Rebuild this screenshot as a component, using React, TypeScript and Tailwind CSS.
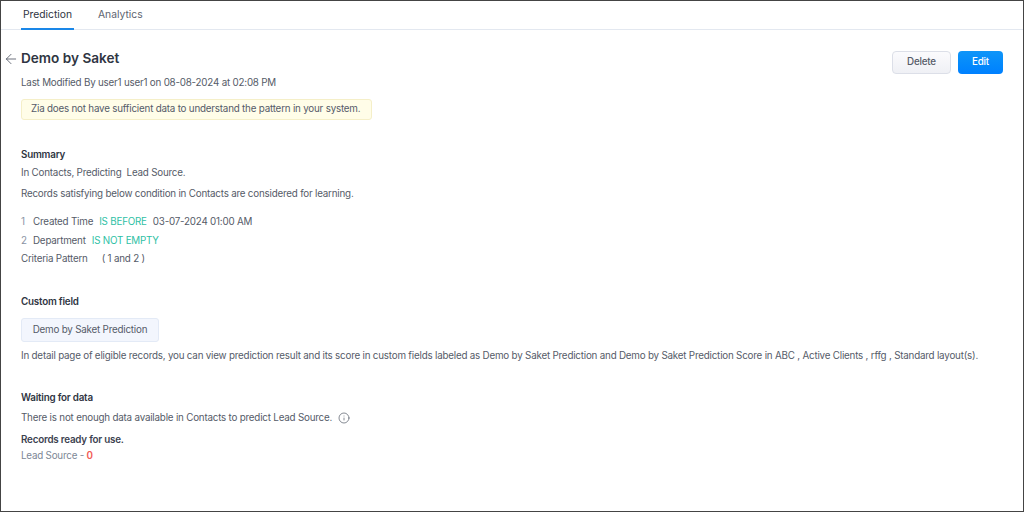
import { ArrowLeft, Info } from 'lucide-react';

export default function App() {
  return (
    <div className="w-[1024px] h-[512px] overflow-hidden bg-white border border-[#444444] font-['Inter',sans-serif] text-[9.8px] tracking-[-0.2px] text-[#555b68]">
      {/* tabs */}
      <div className="flex h-[29px] gap-[24px] border-b border-[#e3e8f0] pl-5 text-[10.3px] tracking-normal">
        <div className="flex h-[29px] w-[53px] items-center justify-center border-b-2 border-[#1a87e8] text-[#2f3542]">Prediction</div>
        <div className="flex h-[28px] items-center text-[#5d6470]">Analytics</div>
      </div>

      <div className="flex justify-between pr-5 pl-5 pt-[19px]">
        <div className="relative">
          <ArrowLeft className="absolute top-[2px] -left-[18px] text-[#4f5563]" size={16} strokeWidth={1.25} />
          <h1 className="text-[13.6px] leading-[19px] tracking-normal font-semibold text-[#2f3542]">Demo by Saket</h1>
          <p className="mt-[8px] leading-[14px]">Last Modified By user1 user1 on 08-08-2024 at 02:08 PM</p>
          <div className="mt-[9px] flex h-[21px] w-[351px] items-center rounded-[3px] border border-[#f5efc8] bg-[#fffde8] pl-[9px] whitespace-nowrap">
            Zia does not have sufficient data to understand the pattern in your system.
          </div>
        </div>
        <div className="flex gap-[7px] pt-[2px]">
          <button className="h-[23px] w-[59px] rounded-[4px] border border-[#dcdfe8] bg-gradient-to-b from-[#fbfbfd] to-[#eff0f5] font-medium text-[#555b68]">Delete</button>
          <button className="h-[23px] w-[45px] rounded-[4px] bg-gradient-to-b from-[#0f95f8] to-[#0080ff] font-medium text-white">Edit</button>
        </div>
      </div>

      <section className="mt-[28px] pl-5">
        <h2 className="leading-[14px] font-semibold text-[#2f3542]">Summary</h2>
        <p className="mt-[4px] leading-[14px]">In Contacts, Predicting&nbsp; Lead Source.</p>
        <p className="mt-[7px] leading-[14px]">Records satisfying below condition in Contacts are considered for learning.</p>
        <div className="mt-[14px] flex leading-[14px]">
          <span className="w-3 text-[#8a93a3]">1</span>
          <span>Created Time</span>
          <span className="ml-[6px] text-[#2fbfa5]">IS BEFORE</span>
          <span className="ml-[6px]">03-07-2024 01:00 AM</span>
        </div>
        <div className="mt-[5px] flex leading-[14px]">
          <span className="w-3 text-[#8a93a3]">2</span>
          <span>Department</span>
          <span className="ml-[6px] text-[#2fbfa5]">IS NOT EMPTY</span>
        </div>
        <div className="mt-[4px] flex leading-[14px]">
          <span>Criteria Pattern</span>
          <span className="ml-[14px]">( 1 and 2 )</span>
        </div>
      </section>

      <section className="mt-[29px] pl-5">
        <h2 className="leading-[14px] font-semibold text-[#2f3542]">Custom field</h2>
        <div className="mt-[9px] flex h-[24px] w-[138px] items-center justify-center rounded-[3px] border border-[#e3eaf6] bg-[#f3f6fd]">Demo by Saket Prediction</div>
        <p className="mt-[7px] leading-[14px] whitespace-nowrap">In detail page of eligible records, you can view prediction result and its score in custom fields labeled as Demo by Saket Prediction and Demo by Saket Prediction Score in ABC , Active Clients , rffg , Standard layout(s).</p>
      </section>

      <section className="mt-[28px] pl-5">
        <h2 className="leading-[14px] font-semibold text-[#2f3542]">Waiting for data</h2>
        <div className="mt-[6px] flex items-center leading-[14px]">
          <span>There is not enough data available in Contacts to predict Lead Source.</span>
          <Info className="ml-[6px] text-[#5d6470]" size={12} strokeWidth={1.5} />
        </div>
        <h3 className="mt-[8px] leading-[14px] font-semibold text-[#3c4250]">Records ready for use.</h3>
        <p className="mt-[2px] leading-[14px] text-[#7d8796]">Lead Source - <span className="font-semibold text-[#f25a55]">0</span></p>
      </section>
    </div>
  );
}
